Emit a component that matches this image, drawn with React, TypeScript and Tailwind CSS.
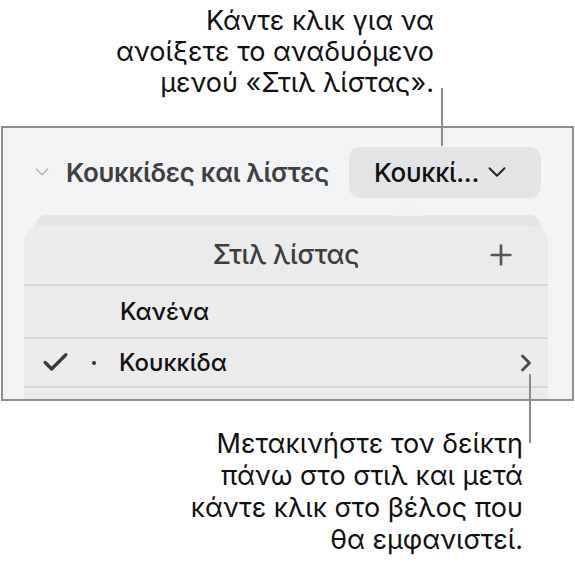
import { Check, ChevronDown, ChevronRight, Plus } from 'lucide-react'

const FONT = "font-['Inter','Noto_Sans',sans-serif]"

function CalloutLine({ className }: { className: string }) {
  return <div className={`absolute w-[2px] bg-[#8a8a8a] ${className}`} />
}

export default function App() {
  return (
    <div className={`${FONT} relative w-[575px] h-[567px] bg-white overflow-hidden`}>
      {/* top annotation */}
      <div className="h-[126px] pt-[5px] pr-[141px] text-right text-[27px] leading-[31px] text-[#111]">
        Κάντε κλικ για να
        <br />
        ανοίξετε το αναδυόμενο
        <br />
        μενού «Στιλ λίστας».
      </div>
      <CalloutLine className="left-[441px] top-[88px] h-[58px]" />

      {/* inspector panel */}
      <div className="ml-[1px] mr-[1px] h-[275px] border-2 border-[#8e8e8e] bg-[#f2f3f5] overflow-hidden">
        <div className="flex items-center h-[70px] pt-[18px]">
          <ChevronDown className="ml-[28px] w-[22px] h-[22px] text-[#b4b5b8]" strokeWidth={1.8} />
          <span className="ml-[13px] text-[26px] font-semibold tracking-[-0.3px] text-[#3f3f42]">
            Κουκκίδες και λίστες
          </span>
          <div className="ml-auto mr-[31px] w-[192px] h-[51px] rounded-[11px] bg-[#e3e4e6] flex items-center pl-[25px] gap-[3px]">
            <span className="text-[26px] font-medium tracking-[-0.3px] text-[#111]">Κουκκί...</span>
            <ChevronDown className="w-[30px] h-[30px] text-[#222]" strokeWidth={1.5} />
          </div>
        </div>

        <div className="relative mt-[17px]">
          <svg className="absolute left-[382px] top-[-13px]" width="46" height="14" viewBox="0 0 46 14">
            <path d="M0 14 C9 14 13 12 18 6 C21 1 25 1 28 6 C33 12 37 14 46 14 Z" fill="#f1f1f3" />
          </svg>
          <div className="ml-[32px] w-[506px] h-[30px] rounded-t-[12px] bg-[#e4e5e7]" />
          <div className="-mt-[19px] ml-[21px] w-[524px] rounded-t-[16px] bg-[#ebebeb]">
            <div className="relative flex items-center justify-center h-[58px]">
              <span className="text-[26.5px] font-medium tracking-[-0.2px] text-[#3d3d3f]">Στιλ λίστας</span>
              <Plus className="absolute right-[31px] w-[32px] h-[32px] text-[#55565a]" strokeWidth={2} />
            </div>
            <div className="h-[2px] bg-[#d6d6d8]" />
            <div className="flex items-center h-[51px] pl-[96px] text-[24px] font-medium text-[#111]">
              Κανένα
            </div>
            <div className="h-[2px] bg-[#d6d6d8]" />
            <div className="flex items-center h-[47px]">
              <Check className="ml-[16px] w-[31px] h-[31px] text-[#3a3a3c]" strokeWidth={2.6} />
              <span className="ml-[21px] w-[4px] h-[4px] rounded-full bg-[#333]" />
              <span className="ml-[23px] text-[24px] font-medium text-[#111]">Κουκκίδα</span>
              <ChevronRight className="ml-auto mr-[8px] w-[28px] h-[28px] text-[#4a4a4c]" strokeWidth={2.4} />
            </div>
            <div className="h-[2px] bg-[#d6d6d8]" />
            <div className="h-[20px]" />
          </div>
        </div>
      </div>

      <CalloutLine className="left-[529px] top-[374px] h-[69px]" />

      {/* bottom annotation */}
      <div className="pt-[27px] pr-[52px] text-right text-[27px] leading-[32px] text-[#111]">
        Μετακινήστε τον δείκτη
        <br />
        πάνω στο στιλ και μετά
        <br />
        κάντε κλικ στο βέλος που
        <br />
        θα εμφανιστεί.
      </div>
    </div>
  )
}
